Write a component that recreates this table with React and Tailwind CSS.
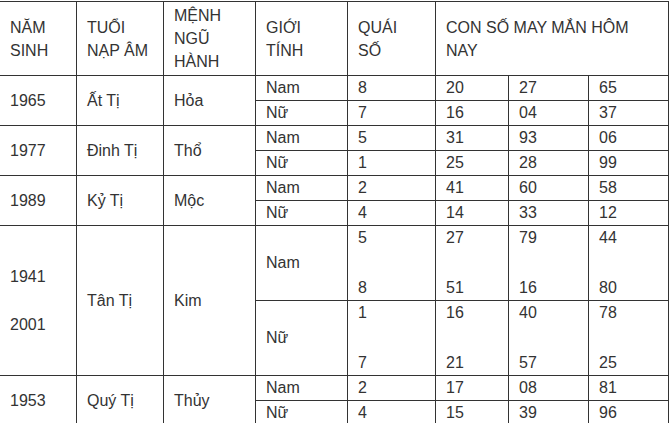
const rows = [
  { year: ['1965'], tuoi: 'Ất Tị', menh: 'Hỏa', tall: false, genders: [
    { g: 'Nam', quai: ['8'], nums: [['20'], ['27'], ['65']] },
    { g: 'Nữ', quai: ['7'], nums: [['16'], ['04'], ['37']] },
  ] },
  { year: ['1977'], tuoi: 'Đinh Tị', menh: 'Thổ', tall: false, genders: [
    { g: 'Nam', quai: ['5'], nums: [['31'], ['93'], ['06']] },
    { g: 'Nữ', quai: ['1'], nums: [['25'], ['28'], ['99']] },
  ] },
  { year: ['1989'], tuoi: 'Kỷ Tị', menh: 'Mộc', tall: false, genders: [
    { g: 'Nam', quai: ['2'], nums: [['41'], ['60'], ['58']] },
    { g: 'Nữ', quai: ['4'], nums: [['14'], ['33'], ['12']] },
  ] },
  { year: ['1941', '2001'], tuoi: 'Tân Tị', menh: 'Kim', tall: true, genders: [
    { g: 'Nam', quai: ['5', '8'], nums: [['27', '51'], ['79', '16'], ['44', '80']] },
    { g: 'Nữ', quai: ['1', '7'], nums: [['16', '21'], ['40', '57'], ['78', '25']] },
  ] },
  { year: ['1953'], tuoi: 'Quý Tị', menh: 'Thủy', tall: false, genders: [
    { g: 'Nam', quai: ['2'], nums: [['17'], ['08'], ['81']] },
    { g: 'Nữ', quai: ['4'], nums: [['15'], ['39'], ['96']] },
  ] },
];

const cell = 'bg-white pl-[10px] pr-2 flex flex-col justify-center';

// a cell whose values sit at the top and bottom of a tall row
const Stack = ({ values }) => (
  <div className={`bg-white pl-[10px] pr-2 flex flex-col ${values.length > 1 ? 'justify-between' : 'justify-center'}`}>
    {values.map((v, i) => (
      <span key={i}>{v}</span>
    ))}
  </div>
);

export default function App() {
  return (
    <div className="w-[670px] h-[423px] overflow-hidden bg-white">
      <div
        className="grid grid-cols-[76px_86px_91px_91px_87px_72px_79px_79px] gap-px p-px bg-[#333] -ml-px mt-px w-[670px] text-[16px] leading-[24px] text-[#333]"
        style={{ fontFamily: '"Liberation Sans", Arial, sans-serif' }}
      >
        {/* header */}
        <div className={`${cell} h-[73px] leading-[23px]`}>NĂM<br />SINH</div>
        <div className={`${cell} leading-[23px]`}>TUỔI<br />NẠP ÂM</div>
        <div className={`${cell} leading-[23px]`}>MỆNH<br />NGŨ<br />HÀNH</div>
        <div className={`${cell} leading-[23px]`}>GIỚI<br />TÍNH</div>
        <div className={`${cell} leading-[23px]`}>QUÁI<br />SỐ</div>
        <div className={`${cell} col-span-3 leading-[23px]`}>CON SỐ MAY MẮN HÔM<br />NAY</div>

        {rows.map((r) => (
          <div key={r.tuoi} className="contents">
            <div className={`${cell} row-span-2`}>
              {r.year.length > 1 ? (
                <>
                  {r.year[0]}
                  <br />
                  <br />
                  {r.year[1]}
                </>
              ) : (
                r.year[0]
              )}
            </div>
            <div className={`${cell} row-span-2`}>{r.tuoi}</div>
            <div className={`${cell} row-span-2`}>{r.menh}</div>
            {r.genders.map((g, gi) => (
              <div key={g.g} className="contents">
                <div className={`${cell} ${r.tall ? 'h-[74px]' : 'h-[24px]'} ${gi > 0 ? 'col-start-4' : ''}`}>{g.g}</div>
                <Stack values={g.quai} />
                {g.nums.map((n, ni) => (
                  <Stack key={ni} values={n} />
                ))}
              </div>
            ))}
          </div>
        ))}
      </div>
    </div>
  );
}
